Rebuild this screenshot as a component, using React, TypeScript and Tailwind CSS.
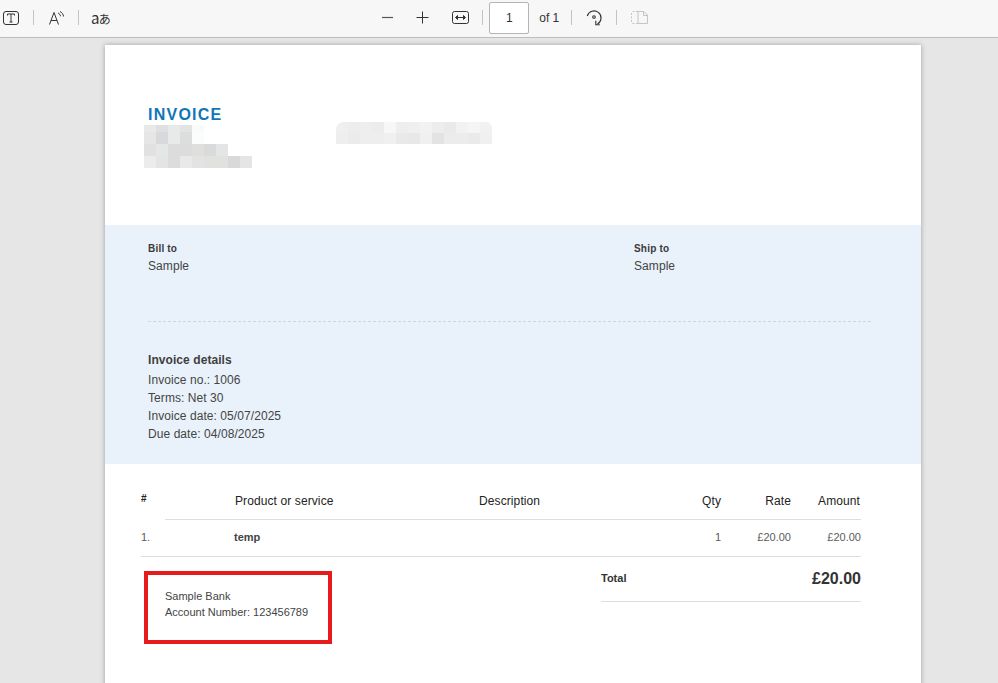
const leftMosaic = [
  { h: "h-[7px]", cells: ["#e9e9e9", "#dfe0e1", "#e9e9e9", "#e2e3e4", "#f8fbfb"] },
  { h: "h-[12px]", cells: ["#e6e6e6", "#d8d9da", "#e8eaea", "#dcdddd", "#fbfdfd"] },
  { h: "h-[12px]", cells: ["#e1e1e1", "#e5e6e6", "#dcdcdc", "#dcdcdc", "#dfdfdd", "#d9dadb", "#e4e6e6"] },
  { h: "h-[12px]", cells: ["#ececec", "#e3e4e4", "#dcdcdc", "#e9e9e8", "#e2e4e3", "#e1e2e0", "#e1e2e0", "#d8d9d8", "#e4e5e4"] },
];

const rightMosaic = [
  ["#efefef", "#ededed", "#eeeeee", "#ececec", "#f7f7f7", "#eeeeee", "#efefef", "#f2f2f2", "#ededed", "#eaeaea", "#f2f2f2", "#f5f5f5", "#f1f1f1"],
  ["#eeeeee", "#ebebeb", "#eeeeee", "#eeeeee", "#f0f0f0", "#e9e9e9", "#e8e8e8", "#f0f0f0", "#e3e3e3", "#ececec", "#ececec", "#eaeaea", "#f0f0f0"],
];

const details = ["Invoice no.: 1006", "Terms: Net 30", "Invoice date: 05/07/2025", "Due date: 04/08/2025"];

function Sep({ className }: { className: string }) {
  return <div className={`h-[15px] w-px bg-[#c4c4c4] ${className}`} />;
}

function Toolbar() {
  return (
    <div className="flex h-[38px] items-center border-b border-[#bdbdbd] bg-[#f7f7f7] pb-[2px] text-[#333]">
      <svg className="ml-[3px]" width="16" height="14" viewBox="0 0 16 14" fill="none" stroke="#333" strokeWidth="1">
        <rect x="0.5" y="0.5" width="15" height="13" rx="2.5" />
        <path d="M4.500 3h7M8 3v8M6.500 11h3M4.500 3v1.500M11.500 3v1.500" />
      </svg>
      <Sep className="ml-[14px]" />
      <svg className="ml-[15px]" width="16" height="14" viewBox="0 0 16 14" fill="none" stroke="#333" strokeWidth="1">
        <path d="M0.500 13.500L5 1.500l4.500 12M2 9.500h6" />
        <path d="M9 2c1.400.6 2.300 1.700 2.600 3.300M11 0.500c1.900.9 3.200 2.600 3.600 5" />
      </svg>
      <Sep className="ml-[13px]" />
      <div className="ml-[12px] font-['Noto_Sans_CJK_JP','Noto_Sans',sans-serif] text-[12px] leading-none tracking-[-0.6px]">
        <span className="text-[15px]">a</span>あ
      </div>
      <svg className="ml-[271px]" width="13" height="13" viewBox="0 0 13 13" fill="none" stroke="#555" strokeWidth="1.200">
        <path d="M1 6.500h11" />
      </svg>
      <svg className="ml-[22px]" width="13" height="13" viewBox="0 0 13 13" fill="none" stroke="#333" strokeWidth="1">
        <path d="M0.500 6.500h12M6.500 0.500v12" />
      </svg>
      <svg className="ml-[23px]" width="17" height="13" viewBox="0 0 17 13" fill="none" stroke="#333" strokeWidth="1">
        <rect x="0.500" y="0.500" width="16" height="12" rx="2" />
        <path d="M4 6.500h9" />
        <path d="M5.500 4.500L3.500 6.500l2 2zM11.500 4.500l2 2-2 2z" fill="#333" />
      </svg>
      <Sep className="ml-[13px]" />
      <div className="ml-[6px] flex h-[32px] w-[40px] items-center justify-center rounded-[2px] border border-[#b5b5b5] bg-white text-[12px]">1</div>
      <span className="ml-[10px] text-[12px]">of 1</span>
      <Sep className="ml-[12px]" />
      <svg className="ml-[14px]" width="17" height="18" viewBox="0 0 17 18" fill="none" stroke="#333" strokeWidth="1.100">
        <path d="M1.300 7A7 7 0 1 1 11.500 15" />
        <circle cx="8" cy="8" r="1.300" />
        <path d="M9.800 11.800v4h4" />
      </svg>
      <Sep className="ml-[13px]" />
      <svg className="ml-[14px]" width="17" height="13" viewBox="0 0 17 13" fill="none" stroke="#c4c4c4" strokeWidth="1">
        <path d="M7 0.500H2a1.500 1.500 0 0 0-1.500 1.500v9A1.500 1.500 0 0 0 2 12.500h5" strokeDasharray="2 1.500" />
        <path d="M7 0.500h6l3.500 3.500v8.500H7zM12.500 0.500V4.500h4" />
      </svg>
    </div>
  );
}

function InvoiceHeader() {
  return (
    <div className="flex h-[180px] pl-[39px] pt-[62px]">
      <div className="w-[192px]">
        <div className="ml-[4px] text-[16px] leading-[16px] font-bold tracking-[1.250px] text-[#1076b8]">INVOICE</div>
        <div className="mt-[2px] blur-[0.3px]">
          {leftMosaic.map((row, i) => (
            <div key={i} className={`flex ${row.h}`}>
              {row.cells.map((c, j) => (
                <div key={j} className="w-[12px]" style={{ background: c }} />
              ))}
            </div>
          ))}
        </div>
      </div>
      <div className="mt-[15px] overflow-hidden rounded-tl-[8px] rounded-tr-[6px] blur-[0.3px]">
        {rightMosaic.map((row, i) => (
          <div key={i} className="flex h-[11px]">
            {row.map((c, j) => (
              <div key={j} className="w-[12px]" style={{ background: c }} />
            ))}
          </div>
        ))}
      </div>
    </div>
  );
}

function BlueBand() {
  return (
    <div className="h-[239px] bg-[#e9f2fa] pl-[43px] pr-[50px] pt-[17px] text-[12px] leading-[18px] tracking-[0.07px] text-[#444]">
      <div className="flex h-[80px] border-b border-dashed border-[#ccd6df]">
        <div className="w-[486px]">
          <div className="text-[10px] leading-[14px] font-bold tracking-[0.2px] text-[#3a3a3a]">Bill to</div>
          <div className="mt-[1px]">Sample</div>
        </div>
        <div>
          <div className="text-[10px] leading-[14px] font-bold tracking-[0.2px] text-[#3a3a3a]">Ship to</div>
          <div className="mt-[1px]">Sample</div>
        </div>
      </div>
      <div className="mt-[29px] font-bold text-[#3f3f3f]">Invoice details</div>
      <div className="mt-[2px]">
        {details.map((d) => (
          <div key={d}>{d}</div>
        ))}
      </div>
    </div>
  );
}

function ItemsTable() {
  return (
    <div className="pl-[36px] pr-[60px] pt-[27px]">
      <div className="ml-[24px] flex h-[29px] items-start border-b border-[#dedede] pr-px text-[12px] leading-[20px] tracking-[0.1px] text-[#222]">
        <div className="-ml-[24px] mt-px w-[94px] text-[10px] leading-[14px] font-bold">#</div>
        <div className="w-[244px]">Product or service</div>
        <div className="w-[156px]">Description</div>
        <div className="w-[86px] text-right">Qty</div>
        <div className="w-[70px] text-right">Rate</div>
        <div className="w-[69px] text-right">Amount</div>
      </div>
      <div className="flex h-[37px] items-center border-b border-[#dedede] pb-[2px] text-[11px] text-[#5c5c5c]">
        <div className="w-[93px]">1.</div>
        <div className="w-[400px] font-bold text-[#444]">temp</div>
        <div className="w-[87px] text-right">1</div>
        <div className="w-[70px] text-right">£20.00</div>
        <div className="w-[70px] text-right">£20.00</div>
      </div>
      <div className="flex">
        <div className="mt-[14px] ml-[3px] h-[73px] w-[188px] shrink-0 border-4 border-[#e61c1c] pl-[17px] pt-[13px] text-[11px] leading-[16px] text-[#444]">
          <div>Sample Bank</div>
          <div>Account Number: 123456789</div>
        </div>
        <div className="ml-[269px] h-[45px] w-[260px] shrink-0 border-b border-[#dedede] pt-[10px]">
          <div className="flex items-center justify-between">
            <span className="-mt-[2px] text-[11px] font-bold text-[#333]">Total</span>
            <span className="text-[16px] font-bold text-[#333]">£20.00</span>
          </div>
        </div>
      </div>
    </div>
  );
}

export default function App() {
  return (
    <div className="h-[683px] overflow-hidden bg-[#e6e6e6] font-['Liberation_Sans',Arial,sans-serif]">
      <Toolbar />
      <div className="ml-[105px] mt-[7px] h-[700px] w-[816px] bg-white shadow-[0_0_5px_rgba(0,0,0,0.3)]">
        <InvoiceHeader />
        <BlueBand />
        <ItemsTable />
      </div>
    </div>
  );
}
